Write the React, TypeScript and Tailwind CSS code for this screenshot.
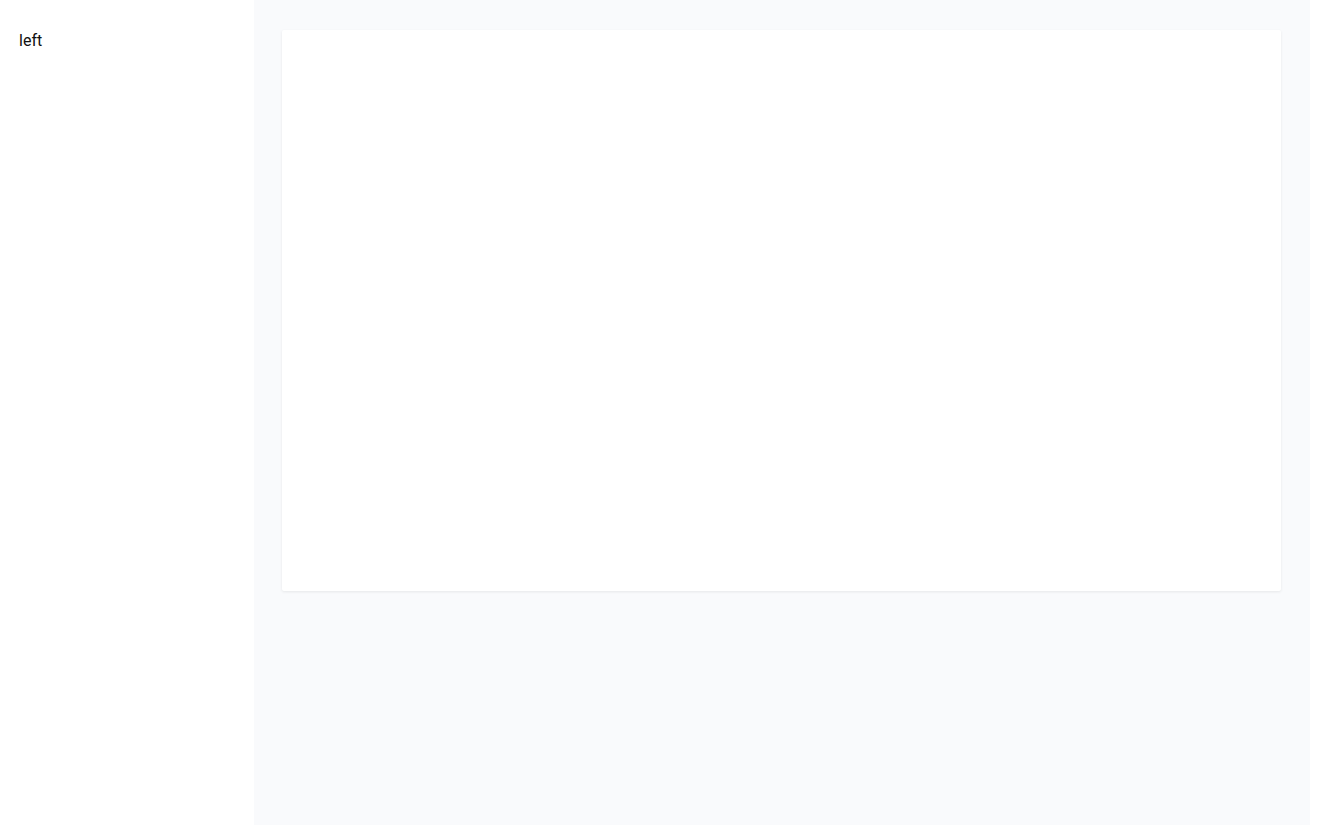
export default function App() {
  return (
    <div className="flex h-[825px] w-[1320px] bg-white font-['Roboto',sans-serif] text-[#111]">
      {/* Sidebar */}
      <aside className="w-[254px] shrink-0 bg-white px-[19px] pt-[29px] shadow-[1px_0_3px_rgba(0,0,0,0.03)]">
        <span className="text-[16px]">left</span>
      </aside>

      {/* Main content */}
      <main className="w-[1056px] shrink-0 bg-[#f9fafc] pl-[28px] pr-[29px] pt-[30px]">
        <div className="h-[561px] rounded-[2px] bg-white shadow-[0_1px_3px_rgba(0,0,0,0.08)]" />
      </main>
    </div>
  );
}
